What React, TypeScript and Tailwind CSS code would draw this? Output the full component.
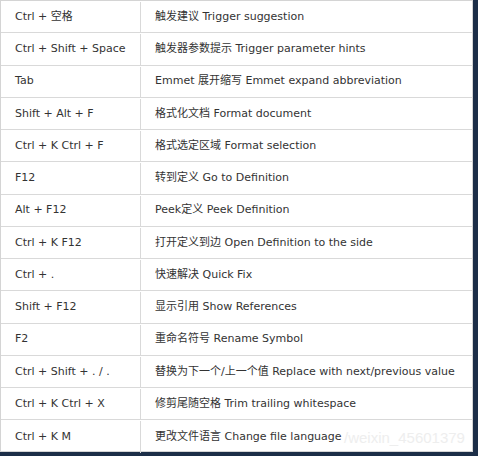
import React from "react";

const rows: [string, string][] = [
  ["Ctrl + 空格", "触发建议 Trigger suggestion"],
  ["Ctrl + Shift + Space", "触发器参数提示 Trigger parameter hints"],
  ["Tab", "Emmet 展开缩写 Emmet expand abbreviation"],
  ["Shift + Alt + F", "格式化文档 Format document"],
  ["Ctrl + K Ctrl + F", "格式选定区域 Format selection"],
  ["F12", "转到定义 Go to Definition"],
  ["Alt + F12", "Peek定义 Peek Definition"],
  ["Ctrl + K F12", "打开定义到边 Open Definition to the side"],
  ["Ctrl + .", "快速解决 Quick Fix"],
  ["Shift + F12", "显示引用 Show References"],
  ["F2", "重命名符号 Rename Symbol"],
  ["Ctrl + Shift + . / .", "替换为下一个/上一个值 Replace with next/previous value"],
  ["Ctrl + K Ctrl + X", "修剪尾随空格 Trim trailing whitespace"],
  ["Ctrl + K M", "更改文件语言 Change file language"],
];

const App = () => {
  return (
    <div className="w-[478px] h-[456px] bg-[#1c2e48] overflow-hidden">
      <div
        className="relative w-[473px] h-[452px] bg-white border border-[#d4d4d4] text-[11px] text-[#333]"
        style={{ fontFamily: '"DejaVu Sans", "Noto Sans CJK SC", sans-serif' }}
      >
        <div
          className="absolute left-[343px] top-[426px] text-[15px] text-[#eeeeee]"
          style={{ fontFamily: '"Liberation Sans", sans-serif' }}
        >
          /weixin_45601379
        </div>
        {rows.map(([key, desc], i) => (
          <div
            key={i}
            className={
              "relative flex h-[32.25px] items-center pt-[1px] " +
              (i < rows.length - 1 ? "border-b border-[#d9d9d9]" : "")
            }
          >
            <div className="w-[140px] h-full flex items-center pl-[14px] border-r border-[#d9d9d9]">
              {key}
            </div>
            <div className="flex-1 h-full flex items-center pl-[14px] whitespace-nowrap">
              {desc}
            </div>
          </div>
        ))}
      </div>
    </div>
  );
};

export default App;
